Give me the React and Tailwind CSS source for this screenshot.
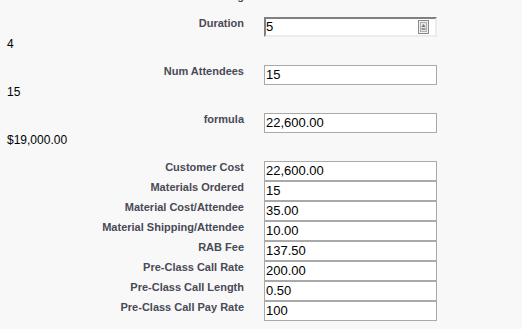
const fields = [
    { label: 'Customer Cost', value: '22,600.00' },
    { label: 'Materials Ordered', value: '15' },
    { label: 'Material Cost/Attendee', value: '35.00' },
    { label: 'Material Shipping/Attendee', value: '10.00' },
    { label: 'RAB Fee', value: '137.50' },
    { label: 'Pre-Class Call Rate', value: '200.00' },
    { label: 'Pre-Class Call Length', value: '0.50' },
    { label: 'Pre-Class Call Pay Rate', value: '100' },
];

const Label = ({ children }) => (
    <div className="w-[244px] shrink-0 text-right text-[11px] leading-[13px] font-bold text-[#4a4a56]">{children}</div>
);

const Field = ({ label, value }) => (
    <div className="flex h-[20px] gap-[20px]">
        <Label>{label}</Label>
        <div className="w-[173px] h-[20px] border border-[#a9a9a9] bg-white pl-[1px] text-[13px] leading-[18px] text-black">{value}</div>
    </div>
);

const Output = ({ children }) => (
    <div className="pl-[7px] text-[12px] leading-[14px] text-black mb-[14px]">{children}</div>
);

const Spinner = () => (
    <svg className="absolute right-[6px] top-[1px]" width="11" height="14" viewBox="0 0 11 14">
        <rect x="0.5" y="0.5" width="10" height="13" fill="#f0f0f0" stroke="#8a8a8a" />
        <rect x="2.5" y="2.5" width="6" height="9" fill="#e4e4e4" stroke="#b0b0b0" />
        <path d="M5.5 4 L7.5 7 L3.5 7 Z" fill="#777" />
        <rect x="3.5" y="8" width="4" height="2" fill="#999" />
    </svg>
);

const App = () => {
    return (
        <div className="h-[329px] w-[522px] overflow-hidden bg-[#f8f8f8] font-['Liberation_Sans',Arial,sans-serif]">
            {/* label of the row above, scrolled out of view */}
            <div className="-mt-[10px] flex h-[13px]">
                <Label>Billing</Label>
            </div>

            <div className="mt-[14px] flex h-[20px] gap-[20px]">
                <Label>Duration</Label>
                <div className="relative w-[173px] h-[20px] border-2 border-t-[#808080] border-l-[#808080] border-r-[#ececec] border-b-[#ececec] bg-white text-[13px] leading-[16px] text-black">
                    5
                    <Spinner />
                </div>
            </div>
            <Output>4</Output>

            <Field label="Num Attendees" value="15" />
            <Output>15</Output>

            <Field label="formula" value="22,600.00" />
            <Output>$19,000.00</Output>

            <div className="flex flex-col">
                {fields.map((f) => (
                    <Field key={f.label} label={f.label} value={f.value} />
                ))}
            </div>
        </div>
    );
};

export default App;
